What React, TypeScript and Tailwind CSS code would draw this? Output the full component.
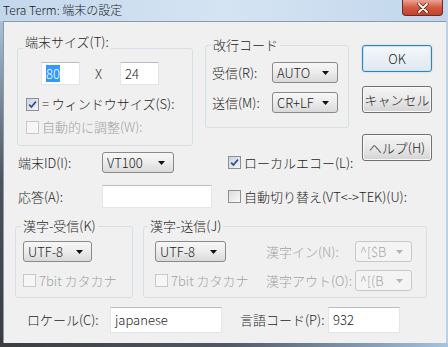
import React from "react";
import clsx from "clsx";

const font = "font-['Noto_Sans_CJK_JP','Noto_Sans',sans-serif] font-light";

function Check({ checked = false, disabled = false }: { checked?: boolean; disabled?: boolean }) {
  return (
    <span
      className={clsx(
        "w-[13px] h-[13px] border flex items-center justify-center shrink-0",
        disabled
          ? "border-[#c9c9c9] bg-[#f6f6f6]"
          : checked
            ? "border-[#8e8f8f] bg-linear-to-br from-[#c8d3e6] to-[#f3f6fb]"
            : "border-[#8e8f8f] bg-linear-to-br from-[#dcdcdc] to-[#fbfbfb]"
      )}
    >
      {checked && (
        <svg width="9" height="9" viewBox="0 0 9 9">
          <path d="M1.2 4.6l2.2 2.4L7.9 1.6" stroke="#3a4d86" strokeWidth="1.7" fill="none" />
        </svg>
      )}
    </span>
  );
}

function Combo({ value, width, disabled = false }: { value: string; width: string; disabled?: boolean }) {
  return (
    <div
      className={clsx(
        "h-[21px] flex items-center justify-between rounded-[3px] border pl-[4px] pr-[8px] shrink-0",
        width,
        disabled
          ? "border-[#c5c9cc] bg-[#f4f4f4] text-[#a6a6a6]"
          : "border-[#8a8a8a] bg-linear-to-b from-[#f7f7f7] via-[#ececec] to-[#d9d9d9] text-[#1e1e1e]"
      )}
    >
      <span className="leading-none">{value}</span>
      <svg width="7" height="4" viewBox="0 0 7 4">
        <path d="M0 0h7L3.5 4z" fill={disabled ? "#b4b4b4" : "#111"} />
      </svg>
    </div>
  );
}

function Field({ width, height = "h-[23px]", children }: { width: string; height?: string; children?: React.ReactNode }) {
  return (
    <div
      className={clsx(
        "bg-white border border-[#e2e6ea] border-t-[#b9bcc2] flex items-center pl-[4px] shrink-0",
        width,
        height
      )}
    >
      {children}
    </div>
  );
}

function Btn({ children, primary = false, className }: { children: React.ReactNode; primary?: boolean; className?: string }) {
  return (
    <div
      className={clsx(
        "w-[70px] h-[27px] rounded-[3px] border flex items-center justify-center",
        primary
          ? "border-[#3c7fb1] bg-linear-to-b from-[#f4f8fb] to-[#dfe9f0] shadow-[inset_0_0_0_1px_#c6e6f8,0_0_2px_#9fd2f0]"
          : "border-[#707070] bg-linear-to-b from-[#f4f4f4] via-[#e9e9e9] to-[#d4d4d4] shadow-[inset_0_0_0_1px_#fafafa]",
        className
      )}
    >
      {children}
    </div>
  );
}

export default function App() {
  return (
    <div className={clsx("w-[448px] h-[347px] overflow-hidden flex flex-col", font)}>
      {/* title bar */}
      <div className="h-[21px] flex items-start justify-between bg-linear-to-r from-[#c3d7ec] via-[#d5e4f3] to-[#c1d6eb]">
        <span className="pl-[3px] pt-[2px] text-[12px] leading-[16px] text-[#1c1c1c]">Tera Term: 端末の設定</span>
        <div className="mr-[5px] w-[41px] h-[16px] rounded-b-[4px] border border-t-0 border-[#6b2b22] bg-linear-to-b from-[#e7a394] via-[#d2583f] to-[#c2432c] flex items-center justify-center">
          <svg width="12" height="10" viewBox="0 0 12 10">
            <path d="M2 1l8 8M10 1L2 9" stroke="#4a1a14" strokeWidth="3.2" strokeLinecap="round" />
            <path d="M2 1l8 8M10 1L2 9" stroke="#fff" strokeWidth="1.8" strokeLinecap="round" />
          </svg>
        </div>
      </div>

      <div className="flex-1 flex min-h-0">
        <div className="w-[3px] bg-linear-to-b from-[#a9c1da] via-[#4c535a] to-[#3a3d40]" />
        <div className="flex-1 bg-[#f0f0f0] border-l border-t border-[#8d99a6] flex flex-col text-[13px] text-[#1e1e1e]">
          {/* top section */}
          <div className="flex items-start">
            <div className="w-[345px] shrink-0 flex flex-col">
              <div className="flex items-start pl-[13px]">
                <fieldset className="mt-[12px] w-[176px] border border-[#d5dfe5] rounded-[3px] pb-[10px]">
                  <legend className="ml-[5px] px-[2px] leading-[16px] pb-[12px]">端末サイズ(T):</legend>
                  <div className="flex items-center pl-[23px]">
                    <Field width="w-[39px]">
                      <span className="bg-[#3399ff] text-white leading-[17px]">80</span>
                    </Field>
                    <span className="ml-[15px] mr-[17px] w-[8px] text-[#333]">X</span>
                    <Field width="w-[39px]">24</Field>
                  </div>
                  <div className="flex items-center gap-[3px] pl-[8px] mt-[11px] h-[16px]">
                    <Check checked />
                    <span>= ウィンドウサイズ(S):</span>
                  </div>
                  <div className="flex items-center gap-[3px] pl-[8px] mt-[7px] h-[16px] text-[#a3a3a3]">
                    <Check disabled />
                    <span>自動的に調整(W):</span>
                  </div>
                </fieldset>

                <fieldset className="ml-[12px] mt-[15px] w-[144px] border border-[#d5dfe5] rounded-[3px] pb-[14px]">
                  <legend className="ml-[5px] px-[2px] leading-[16px]">改行コード</legend>
                  <div className="flex items-center pl-[6px] mt-[9px]">
                    <span className="w-[60px] shrink-0">受信(R):</span>
                    <Combo value="AUTO" width="w-[66px]" />
                  </div>
                  <div className="flex items-center pl-[6px] mt-[9px]">
                    <span className="w-[60px] shrink-0">送信(M):</span>
                    <Combo value="CR+LF" width="w-[66px]" />
                  </div>
                </fieldset>
              </div>

              <div className="flex items-center pl-[14px] mt-[6px] whitespace-nowrap">
                <span className="w-[84px] shrink-0">端末ID(I):</span>
                <Combo value="VT100" width="w-[72px]" />
                <div className="flex items-center gap-[3px] ml-[54px] shrink-0">
                  <Check checked />
                  <span>ローカルエコー(L):</span>
                </div>
              </div>

              <div className="flex items-center pl-[14px] mt-[12px] whitespace-nowrap">
                <span className="w-[84px] shrink-0">応答(A):</span>
                <Field width="w-[110px]" />
                <div className="flex items-center gap-[3px] ml-[16px] shrink-0">
                  <Check />
                  <span>{"自動切り替え(VT<->TEK)(U):"}</span>
                </div>
              </div>
            </div>

            <div className="ml-[13px] mt-[23px] flex flex-col">
              <Btn primary>OK</Btn>
              <Btn className="mt-[14px]">キャンセル</Btn>
              <Btn className="mt-[21px]">ヘルプ(H)</Btn>
            </div>
          </div>

          {/* kanji groups */}
          <div className="flex items-start pl-[11px] mt-[10px]">
            <fieldset className="w-[118px] border border-[#d5dfe5] rounded-[3px] pb-[6px] pl-[7px]">
              <legend className="ml-[-2px] px-[2px] leading-[16px]">漢字-受信(K)</legend>
              <div className="mt-[7px]">
                <Combo value="UTF-8" width="w-[69px]" />
              </div>
              <div className="flex items-center gap-[3px] mt-[8px] h-[21px] text-[#a3a3a3]">
                <Check disabled />
                <span>7bit カタカナ</span>
              </div>
            </fieldset>

            <fieldset className="ml-[10px] w-[284px] border border-[#d5dfe5] rounded-[3px] pb-[6px] pl-[11px]">
              <legend className="ml-[-7px] px-[2px] leading-[16px]">漢字-送信(J)</legend>
              <div className="mt-[7px] grid grid-cols-[111px_89px_57px] gap-y-[8px] items-center">
                <Combo value="UTF-8" width="w-[71px]" />
                <span className="text-[#a3a3a3] whitespace-nowrap">漢字イン(N):</span>
                <Combo value="^[$B" width="w-[57px]" disabled />
                <div className="flex items-center gap-[3px] h-[21px] text-[#a3a3a3]">
                  <Check disabled />
                  <span>7bit カタカナ</span>
                </div>
                <span className="text-[#a3a3a3] whitespace-nowrap">漢字アウト(O):</span>
                <Combo value="^[(B" width="w-[57px]" disabled />
              </div>
            </fieldset>
          </div>

          {/* locale row */}
          <div className="flex items-center pl-[23px] mt-[9px]">
            <span className="w-[83px] shrink-0">ロケール(C):</span>
            <Field width="w-[112px]" height="h-[26px]">japanese</Field>
            <span className="ml-[18px] w-[88px] shrink-0 whitespace-nowrap">言語コード(P):</span>
            <Field width="w-[72px]" height="h-[26px]">932</Field>
          </div>
        </div>
        <div className="w-[2px] bg-[#b9d0e8]" />
      </div>
      <div className="h-[4px] bg-linear-to-r from-[#3b3d40] via-[#4f5966] to-[#a7c3df]" />
    </div>
  );
}
